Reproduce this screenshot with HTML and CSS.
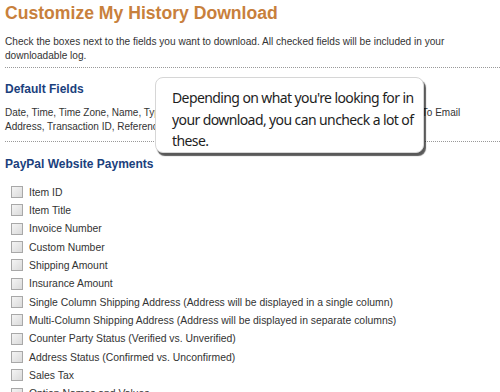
FILE: index.html
```html
<!DOCTYPE html>
<html lang="en">
<head>
  <meta charset="UTF-8" />
  <title>Customize My History Download</title>
  <link rel="stylesheet" href="styles.css">
</head>
<body>

  <div class="page">
    <h1>Customize My History Download</h1>
    <p class="intro">Check the boxes next to the fields you want to download. All checked fields will be included in your<br>downloadable log.</p>

    <div class="section">
      <h3>Default Fields</h3>
      <p class="defaults">Date, Time, Time Zone, Name, Type, Status, Currency, Gross, Fee, Net, From Email Address, To Email<br>Address, Transaction ID, Reference Txn ID, Receipt ID, Balance</p>
    </div>

    <div class="section last">
      <h3>PayPal Website Payments</h3>
      <ul class="fields">
        <li><span class="box"></span>Item ID</li>
        <li><span class="box"></span>Item Title</li>
        <li><span class="box"></span>Invoice Number</li>
        <li><span class="box"></span>Custom Number</li>
        <li><span class="box"></span>Shipping Amount</li>
        <li><span class="box"></span>Insurance Amount</li>
        <li><span class="box"></span>Single Column Shipping Address (Address will be displayed in a single column)</li>
        <li><span class="box"></span>Multi-Column Shipping Address (Address will be displayed in separate columns)</li>
        <li><span class="box"></span>Counter Party Status (Verified vs. Unverified)</li>
        <li><span class="box"></span>Address Status (Confirmed vs. Unconfirmed)</li>
        <li><span class="box"></span>Sales Tax</li>
        <li><span class="box"></span>Option Names and Values</li>
      </ul>
    </div>
  </div>

  <div class="tip">Depending on what you're looking for in<br>your download, you can uncheck a lot of<br>these.</div>

</body>
</html>
```

FILE: styles.css
```css
body {
  font-family: Arial, "Liberation Sans", sans-serif;
  margin: 0;
  padding: 0;
  background: #fff;
  color: #333;
  overflow: hidden;
}

.page {
  padding: 0 0 0 5px;
}

h1 {
  font-size: 17.6px;
  line-height: 22px;
  color: #c8803c;
  margin: 0;
  padding-top: 2px;
}

.intro {
  font-size: 10.1px;
  line-height: 14px;
  margin: 11px 0 0 0;
  padding-bottom: 4px;
  border-bottom: 1px dotted #999;
  white-space: nowrap;
}

.section {
  border-bottom: 1px dotted #999;
}

.section.last {
  border-bottom: none;
}

h3 {
  font-size: 12px;
  line-height: 14px;
  color: #1b3f7d;
  margin: 0;
  padding-top: 14px;
}

.section.last h3 {
  padding-top: 15px;
}

.defaults {
  font-size: 10px;
  line-height: 14px;
  margin: 10px 0 0 0;
  padding-bottom: 7px;
  white-space: nowrap;
}

.fields {
  list-style: none;
  margin: 12px 0 0 0;
  padding: 0;
}

.fields li {
  height: 18.33px;
  display: flex;
  align-items: center;
  font-size: 10.4px;
}

.box {
  width: 10px;
  height: 10px;
  margin: 0 6px 0 6px;
  border: 1px solid #a8a8a8;
  background: linear-gradient(135deg, #f4f4f4, #dadada);
}

.tip {
  position: absolute;
  left: 155px;
  top: 77px;
  width: 236px;
  height: 65px;
  padding: 9px 15px 0 16px;
  background: #fff;
  border: 1px solid #d6d6d6;
  border-radius: 8px;
  box-shadow: 2px 3px 1px rgba(0, 0, 0, 0.65);
  font-family: "Noto Sans", sans-serif;
  font-size: 14px;
  line-height: 21.5px;
  letter-spacing: -0.6px;
  white-space: nowrap;
  color: #1e1e1e;
}
```
